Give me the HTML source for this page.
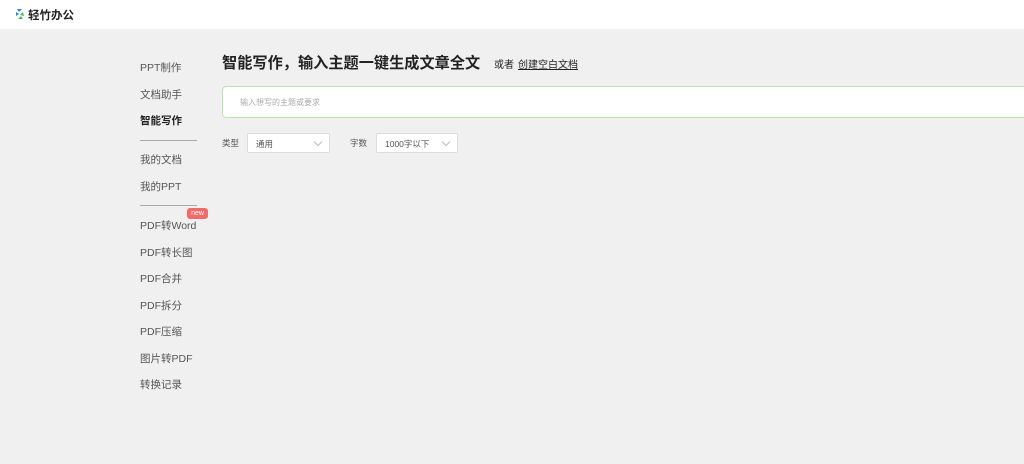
<!DOCTYPE html>
<html><head><meta charset="utf-8"><style>
*{margin:0;padding:0;box-sizing:border-box}
body{width:1024px;height:464px;background:#f0f0f0;font-family:"Liberation Sans","Noto Sans CJK SC",sans-serif;position:relative;overflow:hidden}
.top{position:absolute;left:0;top:0;width:1024px;height:29px;background:#fff}
.logo{position:absolute;left:28px;top:7px;font-size:11.5px;color:#222;font-weight:bold}
.nav{position:absolute;left:140px;font-size:10.5px;color:#555}
.line{position:absolute;left:140px;width:57px;height:1px;background:#aaa}
h1{position:absolute;left:222px;top:51px;font-size:15.2px;font-weight:bold;color:#222;white-space:nowrap}
.or{position:absolute;left:494px;top:56px;font-size:10px;color:#222}
.or u{margin-left:4px}
.inp{position:absolute;left:222px;top:86px;width:820px;height:32px;background:#fff;border:1px solid #b9e3ab;border-radius:4px;font-size:8px;color:#aaa;padding:10px 0 0 17px}
.lbl{position:absolute;top:137px;font-size:8.5px;color:#555}
.sel{position:absolute;top:133px;height:20px;background:#fff;border:1px solid #ddd;border-radius:2px;font-size:8.5px;color:#555;padding:4px 0 0 8px}
.sel:after{content:"";position:absolute;right:8px;top:5px;width:5px;height:5px;border-right:1px solid #bbb;border-bottom:1px solid #bbb;transform:rotate(45deg)}
.new{position:absolute;left:187px;top:208px;width:21px;height:11px;background:#f36a6a;border-radius:3px;color:#fff;font-size:7px;text-align:center;line-height:11px}
</style></head><body>
<div class="top"></div>
<svg style="position:absolute;left:15px;top:8px" width="10" height="12" viewBox="0 0 10 12"><path d="M2 1h5L4 4z" fill="#2e7de1"/><path d="M1 4l3 2-3 2z" fill="#2e7de1"/><path d="M8 4l-3 3 4 1z" fill="#3ec05a"/><path d="M3 11h5L6 8z" fill="#3ec05a"/></svg>
<div class="logo">轻竹办公</div>
<div class="nav" style="top:60px">PPT制作</div>
<div class="nav" style="top:87px">文档助手</div>
<div class="nav" style="top:113px;color:#222;font-weight:bold">智能写作</div>
<div class="line" style="top:140px"></div>
<div class="nav" style="top:152px">我的文档</div>
<div class="nav" style="top:179px">我的PPT</div>
<div class="line" style="top:205px"></div>
<div class="new">new</div>
<div class="nav" style="top:218px">PDF转Word</div>
<div class="nav" style="top:245px">PDF转长图</div>
<div class="nav" style="top:271px">PDF合并</div>
<div class="nav" style="top:298px">PDF拆分</div>
<div class="nav" style="top:324px">PDF压缩</div>
<div class="nav" style="top:351px">图片转PDF</div>
<div class="nav" style="top:377px">转换记录</div>
<h1>智能写作，输入主题一键生成文章全文</h1>
<div class="or">或者<u>创建空白文档</u></div>
<div class="inp">输入想写的主题或要求</div>
<div class="lbl" style="left:222px">类型</div>
<div class="sel" style="left:247px;width:83px">通用</div>
<div class="lbl" style="left:350px">字数</div>
<div class="sel" style="left:376px;width:82px">1000字以下</div>
</body></html>
